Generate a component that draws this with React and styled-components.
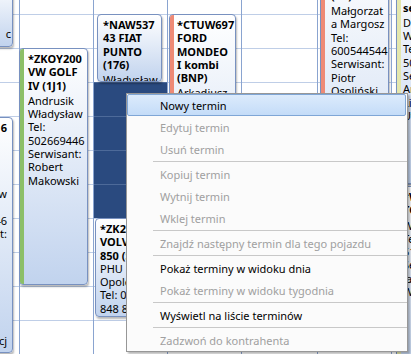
import React from 'react';
import styled, { createGlobalStyle, css } from 'styled-components';

const Global = createGlobalStyle`
  html, body { margin: 0; padding: 0; background: #fff; }
  body { width: 411px; height: 354px; overflow: hidden; font-family: "Noto Sans", "Open Sans", sans-serif; }
`;

const Screen = styled.div`
  position: relative;
  width: 411px;
  height: 354px;
  overflow: hidden;
  background: #fff;
`;

const Grid = styled.div`
  display: flex;
  height: 100%;
  background-image: linear-gradient(to bottom, transparent 33px, #bfcee7 33px);
  background-size: 100% 34px;
  background-position: 0 15px;
`;

const Column = styled.div`
  position: relative;
  box-sizing: border-box;
  flex: 0 0 ${(p) => p.$w}px;
  height: 100%;
  border-left: ${(p) => (p.$first ? 'none' : '1px solid #8aa4d0')};
`;

const Selection = styled.div`
  position: absolute;
  left: ${(p) => p.$x}px;
  top: ${(p) => p.$y}px;
  width: ${(p) => p.$w}px;
  height: ${(p) => p.$h}px;
  background-color: #2a4a7f;
  background-image: linear-gradient(to bottom, transparent 33px, #4d6a99 33px);
  background-size: 100% 34px;
  background-position: 0 1px;
`;

const Card = styled.div`
  position: absolute;
  box-sizing: border-box;
  left: ${(p) => p.$x}px;
  top: ${(p) => p.$y}px;
  width: ${(p) => p.$w}px;
  height: ${(p) => p.$h}px;
  display: flex;
  border: 1px solid #7891c0;
  border-radius: 4px;
  background: linear-gradient(to bottom, #ffffff 0%, #c1d3ee 100%);
  box-shadow: 1px 2px 2px rgba(0, 0, 0, 0.28);
  overflow: hidden;
`;

const Stripe = styled.div`
  flex: 0 0 ${(p) => p.$w}px;
  background: ${(p) => p.$color};
`;

const CardBody = styled.div`
  flex: 1;
  min-width: 0;
  padding: 3px ${(p) => p.$padR}px 0 ${(p) => p.$padL}px;
  font-size: 11px;
  line-height: 13.3px;
  color: #000;
  text-align: ${(p) => p.$align};
  white-space: nowrap;
  overflow: hidden;
`;

const TitleLine = styled.div`
  font-weight: 700;
`;

const Details = styled.div`
  margin-top: ${(p) => p.$gap}px;
`;

const Line = styled.div``;

const Menu = styled.div`
  position: absolute;
  left: 126px;
  top: 93px;
  width: 282px;
  box-sizing: border-box;
  display: flex;
  flex-direction: column;
  border: 1px solid #979797;
  background: #fbfbfb;
  box-shadow: 2px 2px 2px rgba(0, 0, 0, 0.28);
  font-family: "Noto Sans", "Open Sans", sans-serif;
  font-size: 11px;
`;

const Item = styled.div`
  box-sizing: border-box;
  height: 22px;
  display: flex;
  align-items: center;
  padding-left: 33px;
  white-space: nowrap;
  color: ${(p) => (p.$disabled ? '#a0a0a0' : '#000')};
  ${(p) =>
    p.$active &&
    css`
      padding-left: 32px;
      margin-right: 1px;
      border: 1px solid #7fa6d6;
      border-radius: 2px;
      background: linear-gradient(to bottom, #dcebfc, #c4dcf8);
    `}
`;

const Separator = styled.div`
  height: 1px;
  margin: 1px 0 1px 26px;
  background: #c8c8c8;
`;

const nb = '\u00a0';

const columns = [
  {
    w: 19,
    first: true,
    cards: [
      { x: -60, y: -19, w: 73, h: 66, align: 'right', padL: 2, padR: 1, title: [], body: [nb, nb, nb, 'c', nb] },
      {
        x: -60, y: 117, w: 73, h: 236, align: 'right', padL: 2, padR: 5, gap: 0,
        title: ['6', nb, nb],
        body: [nb, nb, 'w', nb, '46', 't:', nb, nb, nb, nb, nb, nb, nb, 'cj', nb],
      },
    ],
  },
  {
    w: 74,
    cards: [
      {
        x: -1, y: 48, w: 69, h: 237, stripe: '#8cbf68', padL: 4,
        title: ['*ZKOY200', 'VW GOLF', 'IV (1J1)'],
        body: ['Andrusik', 'Władysław', 'Tel:', '502669446', 'Serwisant:', 'Robert', 'Makowski'],
      },
    ],
  },
  {
    w: 74,
    selection: { x: 0, y: 82, w: 73, h: 136 },
    cards: [
      {
        x: 3, y: 14, w: 65, h: 68, padL: 5,
        title: ['*NAW537', '43 FIAT', 'PUNTO', '(176)'],
        body: ['Władysław', 'Kowalski'],
      },
      {
        x: 1, y: 218, w: 72, h: 99, padL: 4,
        title: ['*ZK2211', 'VOLVO', '850 (S)'],
        body: ['PHU', 'Opole', 'Tel: 0', '848 8'],
        gap: 0,
      },
    ],
  },
  {
    w: 74,
    cards: [
      {
        x: 1, y: 14, w: 67, h: 260, stripe: '#ee8a76', padL: 3,
        title: ['*CTUW697', 'FORD', 'MONDEO', 'I kombi', '(BNP)'],
        body: ['Arkadiusz', 'Nowak', 'Tel:', '601223344'],
      },
    ],
  },
  { w: 76, cards: [] },
  {
    w: 74,
    cards: [
      {
        x: 2, y: -55, w: 69, h: 330, stripe: '#ee8a76', padL: 6,
        title: ['*WZ1234', 'OPEL', 'ASTRA', '(BL)'],
        body: ['Małgorzat', 'a Margosz', 'Tel:', '600544544', 'Serwisant:', 'Piotr', 'Osoliński'],
      },
    ],
  },
  {
    w: 20,
    cards: [
      {
        x: 4, y: -30, w: 70, h: 214, stripe: '#e4e7ad', padL: 2,
        title: ['*WI4455', 'SKODA', 'sedan'],
        body: ['Dariusz', 'Wiśniewski', 'Tel:', '501234567', 'Serwisant:', 'Andrzej', 'Lis', 'Uwagi'],
      },
      {
        x: 4, y: 186, w: 70, h: 190, stripe: '#e4e7ad', padL: 2,
        title: ['*WE5521', 'TOYOTA'],
        body: ['Wojciech', 'Tel:', '512334455', 'Serwisant:', 'Jan', 'Wróbel'],
      },
    ],
  },
];

const menuItems = [
  { label: 'Nowy termin', active: true },
  { label: 'Edytuj termin', disabled: true },
  { label: 'Usuń termin', disabled: true },
  'sep',
  { label: 'Kopiuj termin', disabled: true },
  { label: 'Wytnij termin', disabled: true },
  { label: 'Wklej termin', disabled: true },
  'sep',
  { label: 'Znajdź następny termin dla tego pojazdu', disabled: true },
  'sep',
  { label: 'Pokaż terminy w widoku dnia' },
  { label: 'Pokaż terminy w widoku tygodnia', disabled: true },
  'sep',
  { label: 'Wyświetl na liście terminów' },
  'sep',
  { label: 'Zadzwoń do kontrahenta', disabled: true },
];

function Appointment({ a }) {
  return (
    <Card $x={a.x} $y={a.y} $w={a.w} $h={a.h}>
      {a.stripe && <Stripe $w={4} $color={a.stripe} />}
      <CardBody $align={a.align || 'left'} $padL={a.padL ?? 4} $padR={a.padR ?? 2}>
        {a.title.map((t, i) => (
          <TitleLine key={i}>{t}</TitleLine>
        ))}
        <Details $gap={a.gap ?? 2}>
          {a.body.map((t, i) => (
            <Line key={i}>{t}</Line>
          ))}
        </Details>
      </CardBody>
    </Card>
  );
}

export default function App() {
  return (
    <>
      <Global />
      <Screen>
        <Grid>
          {columns.map((col, ci) => (
            <Column key={ci} $w={col.w} $first={col.first}>
              {col.selection && (
                <Selection
                  $x={col.selection.x}
                  $y={col.selection.y}
                  $w={col.selection.w}
                  $h={col.selection.h}
                />
              )}
              {col.cards.map((a, i) => (
                <Appointment key={i} a={a} />
              ))}
            </Column>
          ))}
        </Grid>
        <Menu>
          {menuItems.map((m, i) =>
            m === 'sep' ? (
              <Separator key={i} />
            ) : (
              <Item key={i} $active={m.active} $disabled={m.disabled}>
                {m.label}
              </Item>
            )
          )}
        </Menu>
      </Screen>
    </>
  );
}
